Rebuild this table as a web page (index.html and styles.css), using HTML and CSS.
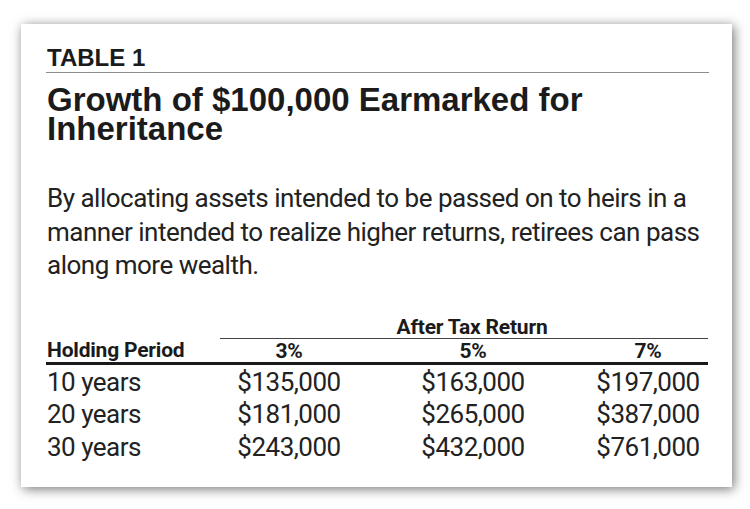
FILE: index.html
```html
<!DOCTYPE html>
<html lang="en">
<head>
<meta charset="utf-8">
<title>Table 1 – Growth of $100,000 Earmarked for Inheritance</title>
<link rel="stylesheet" href="styles.css">
</head>
<body>
<div class="card">
  <div class="label">TABLE 1</div>
  <h1 class="title">Growth of $100,000 Earmarked for<br>Inheritance</h1>
  <p class="lead">By allocating assets intended to be passed on to heirs in a<br>manner intended to realize higher returns, retirees can pass<br>along more wealth.</p>
  <table class="data">
    <colgroup>
      <col class="c-label">
      <col class="c-3">
      <col class="c-5">
      <col class="c-7">
    </colgroup>
    <thead>
      <tr class="group-row">
        <th></th>
        <th colspan="3" class="group">After Tax Return</th>
      </tr>
      <tr class="head-row">
        <th class="left">Holding Period</th>
        <th>3%</th>
        <th>5%</th>
        <th>7%</th>
      </tr>
    </thead>
    <tbody>
      <tr class="first">
        <td class="left">10 years</td>
        <td>$135,000</td>
        <td>$163,000</td>
        <td>$197,000</td>
      </tr>
      <tr>
        <td class="left">20 years</td>
        <td>$181,000</td>
        <td>$265,000</td>
        <td>$387,000</td>
      </tr>
      <tr>
        <td class="left">30 years</td>
        <td>$243,000</td>
        <td>$432,000</td>
        <td>$761,000</td>
      </tr>
    </tbody>
  </table>
</div>
</body>
</html>
```
FILE: styles.css
```css
html, body {
  margin: 0;
  padding: 0;
  background: #ffffff;
}

body {
  width: 750px;
  height: 509px;
  overflow: hidden;
  font-family: "Liberation Sans", Arial, sans-serif;
  color: #1b1b1b;
}

.card {
  margin: 24px 0 0 21px;
  width: 711px;
  height: 463px;
  box-sizing: border-box;
  padding: 22px 23px 0 25px;
  background: #ffffff;
  box-shadow: 2px 2px 11px rgba(0, 0, 0, 0.55);
}

.label {
  font-size: 24px;
  font-weight: bold;
  line-height: 24px;
  padding: 0 0 2px 1px;
  border-bottom: 1px solid #8c8c8c;
}

.title {
  margin: 12px 0 0 1px;
  font-size: 33px;
  font-weight: bold;
  line-height: 29px;
}

.lead {
  margin: 39px 0 0 1px;
  font-family: Roboto, sans-serif;
  font-size: 26px;
  line-height: 33.5px;
  letter-spacing: -0.5px;
  color: #222;
  white-space: nowrap;
}

.data {
  margin-top: 33px;
  width: 662px;
  border-collapse: collapse;
  font-family: Roboto, sans-serif;
  letter-spacing: -0.5px;
}

.c-label { width: 174px; }
.c-3 { width: 138px; }
.c-5 { width: 230px; }
.c-7 { width: 120px; }

.data th, .data td {
  padding: 0;
  text-align: center;
  white-space: nowrap;
}

.data th {
  font-size: 21px;
  font-weight: bold;
  line-height: 22px;
  letter-spacing: -0.2px;
}

.data .left {
  text-align: left;
  padding-left: 1px;
}

.group-row .group {
  padding-left: 16px;
  border-bottom: 1.5px solid #444;
}

.head-row th {
  padding-top: 1px;
  border-bottom: 3px solid #1a1a1a;
}

.data td {
  font-size: 26px;
  line-height: 32.5px;
  color: #222;
}

.data tr.first td {
  padding-top: 1px;
}
```
